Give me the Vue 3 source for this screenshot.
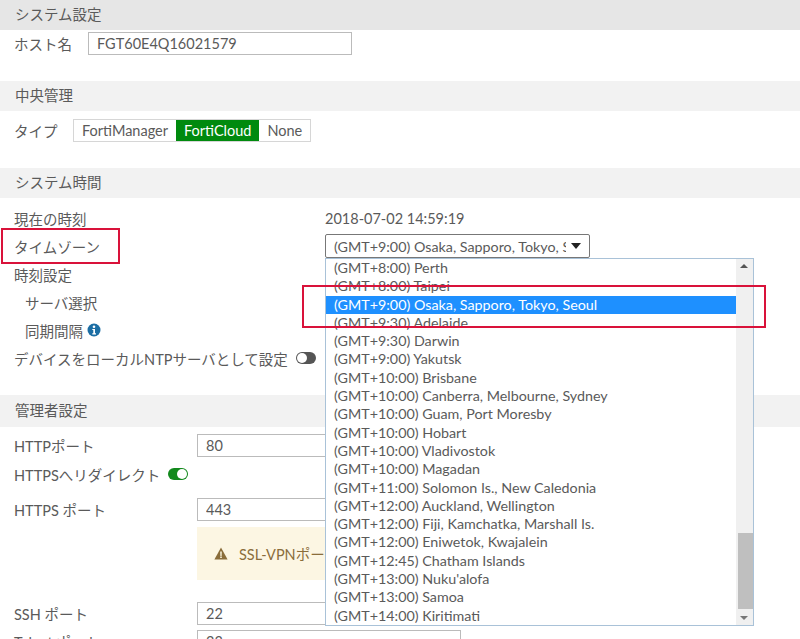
<template>
    <div class="page">
        <div class="section-head first">システム設定</div>
        <div class="row host-row">
            <label class="host-label">ホスト名</label>
            <input class="text-input host-input" value="FGT60E4Q16021579" />
        </div>

        <div class="section-head central-head">中央管理</div>
        <div class="row type-row">
            <label class="type-label">タイプ</label>
            <div class="toggle-group">
                <span v-for="t in types" :key="t" class="toggle-item" :class="{ active: t === 'FortiCloud' }">{{ t }}</span>
            </div>
        </div>

        <div class="section-head time-head">システム時間</div>
        <div class="time-block">
            <div class="row time-row">
                <label class="time-label">現在の時刻</label>
                <span>2018-07-02 14:59:19</span>
            </div>
            <div class="row time-row">
                <label class="time-label">タイムゾーン</label>
                <div class="tz-select">
                    <span class="tz-value">(GMT+9:00) Osaka, Sapporo, Tokyo, Seoul</span>
                    <span class="tz-caret"></span>
                </div>
            </div>
            <div class="row plain-row">時刻設定</div>
            <div class="row plain-row indented">サーバ選択</div>
            <div class="row plain-row indented">
                同期間隔
                <svg class="info-icon" viewBox="0 0 14 14">
                    <circle cx="7" cy="7" r="6.5" fill="#1c6ea4" />
                    <circle cx="7" cy="3.7" r="1.3" fill="#fff" />
                    <path d="M5.3 5.9h2.7v4.4h1v1.2H5.3v-1.2h1V7.1h-1z" fill="#fff" />
                </svg>
            </div>
            <div class="row plain-row">
                デバイスをローカルNTPサーバとして設定
                <span class="switch off"></span>
            </div>
        </div>

        <div class="section-head admin-head">管理者設定</div>
        <div class="row admin-row http-row">
            <label class="admin-label">HTTPポート</label>
            <input class="text-input admin-input" value="80" />
        </div>
        <div class="row plain-row redirect-row">
            HTTPSへリダイレクト
            <span class="switch on"></span>
        </div>
        <div class="row admin-row https-row">
            <label class="admin-label">HTTPS ポート</label>
            <input class="text-input admin-input" value="443" />
        </div>
        <div class="warning">
            <svg class="warning-icon" viewBox="0 0 14 13">
                <path d="M7 0.5 L13.6 12.5 H0.4 Z" fill="#8a6d3b" />
                <path d="M6.2 4.5h1.6l-.2 4.4H6.4z M6.2 9.6h1.6v1.5H6.2z" fill="#fcf8e3" />
            </svg>
            <span>SSL-VPNポー</span>
        </div>
        <div class="row admin-row ssh-row">
            <label class="admin-label">SSH ポート</label>
            <input class="text-input admin-input" value="22" />
        </div>
        <div class="row admin-row telnet-row">
            <label class="admin-label">Telnet ポート</label>
            <input class="text-input admin-input" value="23" />
        </div>

        <!-- open dropdown lies over the form -->
        <div class="tz-list">
            <ul class="tz-options">
                <li v-for="z in zones" :key="z" class="tz-option" :class="{ selected: z === selectedZone }">{{ z }}</li>
            </ul>
            <div class="scrollbar">
                <span class="arrow up"></span>
                <span class="thumb"></span>
                <span class="arrow down"></span>
            </div>
        </div>

        <div class="mark mark-label"></div>
        <div class="mark mark-option"></div>
    </div>
</template>

<script setup>
const types = ['FortiManager', 'FortiCloud', 'None']
const selectedZone = '(GMT+9:00) Osaka, Sapporo, Tokyo, Seoul'
const zones = [
    '(GMT+8:00) Perth',
    '(GMT+8:00) Taipei',
    selectedZone,
    '(GMT+9:30) Adelaide',
    '(GMT+9:30) Darwin',
    '(GMT+9:00) Yakutsk',
    '(GMT+10:00) Brisbane',
    '(GMT+10:00) Canberra, Melbourne, Sydney',
    '(GMT+10:00) Guam, Port Moresby',
    '(GMT+10:00) Hobart',
    '(GMT+10:00) Vladivostok',
    '(GMT+10:00) Magadan',
    '(GMT+11:00) Solomon Is., New Caledonia',
    '(GMT+12:00) Auckland, Wellington',
    '(GMT+12:00) Fiji, Kamchatka, Marshall Is.',
    '(GMT+12:00) Eniwetok, Kwajalein',
    '(GMT+12:45) Chatham Islands',
    "(GMT+13:00) Nuku'alofa",
    '(GMT+13:00) Samoa',
    '(GMT+14:00) Kiritimati',
]
</script>

<style>
html,
body {
    margin: 0;
    height: 639px;
    overflow: hidden;
    background: #fff;
}
</style>

<style scoped>
.page {
    position: relative;
    width: 800px;
    height: 639px;
    overflow: hidden;
    font-family: Lato, "Noto Sans CJK JP", sans-serif;
    font-size: 14.5px;
    color: #5a5a5a;
}

.section-head {
    height: 30px;
    line-height: 30px;
    padding-left: 15px;
    background: #f2f2f2;
}

.section-head.first {
    background: #e6e6e6;
}

.central-head {
    margin-top: 26px;
}

.time-head {
    margin-top: 26px;
}

.admin-head {
    height: 32px;
    line-height: 32px;
    margin-top: 23px;
}

.row {
    display: flex;
    align-items: center;
    padding-left: 14px;
}

.text-input {
    box-sizing: border-box;
    height: 23px;
    width: 264px;
    padding: 0 8px;
    border: 1px solid #bbb;
    font: inherit;
    color: #5a5a5a;
    background: #fff;
    outline: none;
}

.host-row {
    height: 23px;
    margin-top: 2px;
}

.host-label {
    width: 74px;
}

.type-row {
    height: 23px;
    margin-top: 8px;
}

.type-label {
    width: 59px;
}

.toggle-group {
    display: flex;
    height: 23px;
    box-sizing: border-box;
    border: 1px solid #d6d6d6;
}

.toggle-item {
    display: flex;
    align-items: center;
    padding: 0 8px;
}

.toggle-item.active {
    background: #008a0e;
    color: #fff;
}

.time-block {
    margin-top: 6px;
}

.time-row {
    height: 28px;
}

.plain-row {
    height: 28px;
}

.time-label {
    width: 311px;
}

.indented {
    padding-left: 25px;
}

.tz-select {
    box-sizing: border-box;
    display: flex;
    align-items: center;
    width: 265px;
    height: 24px;
    padding-left: 8px;
    border: 1px solid #777;
    border-radius: 2px;
    font-size: 14.3px;
}

.tz-value {
    width: 232px;
    overflow: hidden;
    white-space: nowrap;
}

.tz-caret {
    margin-left: 5px;
    border: 5px solid transparent;
    border-top: 6px solid #222;
    border-bottom: 0;
}

.info-icon {
    width: 14px;
    height: 14px;
    margin-left: 4px;
}

.switch {
    position: relative;
    display: inline-block;
    box-sizing: border-box;
    width: 20px;
    height: 12px;
    margin-left: 8px;
    border-radius: 6px;
}

.switch::after {
    content: "";
    position: absolute;
    top: 1px;
    width: 10px;
    height: 10px;
    border-radius: 50%;
    background: #fff;
}

.switch.off {
    background: #555;
}

.switch.off::after {
    left: 1px;
}

.switch.on {
    background: #13891d;
}

.switch.on::after {
    right: 1px;
}

.admin-label {
    width: 183px;
}

.http-row {
    height: 23px;
    margin-top: 7px;
}

.redirect-row {
    height: 28px;
    margin-top: 3px;
}

.https-row {
    height: 23px;
    margin-top: 10px;
}

.warning {
    display: flex;
    align-items: center;
    box-sizing: border-box;
    width: 500px;
    height: 53px;
    margin: 6px 0 0 197px;
    padding-left: 17px;
    background: #fcf6e3;
    color: #8a6d3b;
}

.warning-icon {
    width: 14px;
    height: 13px;
    margin-right: 11px;
}

.ssh-row {
    height: 23px;
    margin-top: 22px;
}

.telnet-row {
    height: 23px;
    margin-top: 5px;
}

.tz-list {
    position: absolute;
    left: 325px;
    top: 258px;
    display: flex;
    box-sizing: border-box;
    width: 429px;
    height: 368px;
    background: #fff;
    border: 1px solid #a9c2d8;
    font-size: 14.3px;
}

.tz-options {
    flex: 1;
    margin: 0;
    padding: 0;
    list-style: none;
}

.tz-option {
    height: 18.3px;
    line-height: 18.3px;
    padding-left: 8px;
    white-space: nowrap;
}

.tz-option.selected {
    background: #1e90ff;
    color: #fff;
}

.scrollbar {
    position: relative;
    width: 17px;
    background: #f0f0f0;
}

.thumb {
    position: absolute;
    left: 2px;
    right: 0;
    top: 274px;
    height: 76px;
    background: #bfbfbf;
}

.arrow {
    position: absolute;
    left: 4px;
    border: 4px solid transparent;
}

.arrow.up {
    top: 5px;
    border-top: 0;
    border-bottom: 4px solid #555;
}

.arrow.down {
    bottom: 5px;
    border-bottom: 0;
    border-top: 4px solid #777;
}

.mark {
    position: absolute;
    box-sizing: border-box;
    border: 2px solid #d9123a;
}

.mark-label {
    left: 1px;
    top: 228px;
    width: 119px;
    height: 36px;
}

.mark-option {
    left: 302px;
    top: 285px;
    width: 464px;
    height: 43px;
}
</style>
